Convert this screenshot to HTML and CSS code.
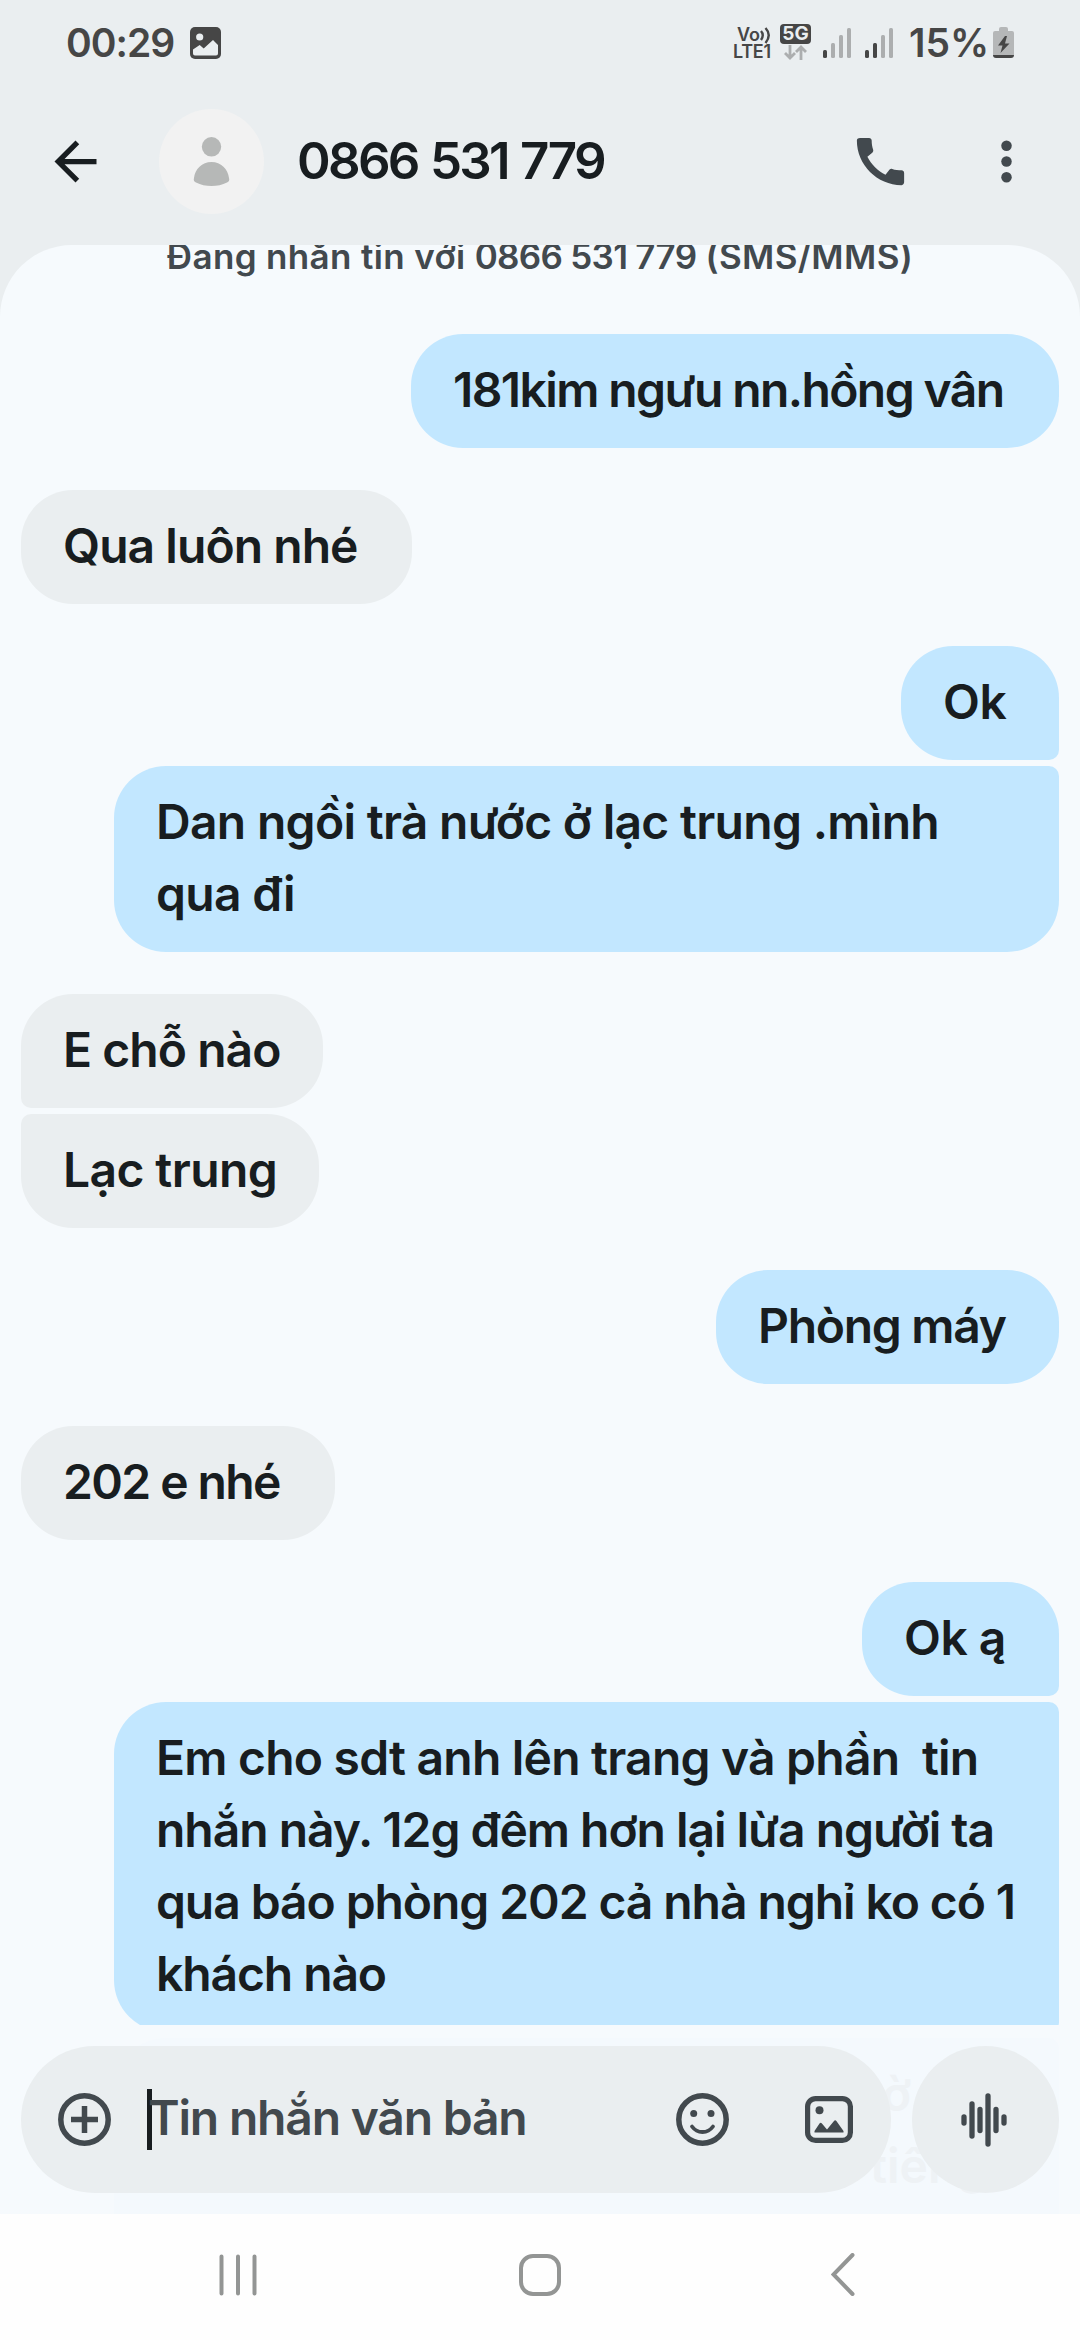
FILE: index.html
```html
<!DOCTYPE html>
<html lang="vi">
<head>
<meta charset="utf-8">
<title>0866 531 779</title>
<link rel="stylesheet" href="styles.css">
</head>
<body>
<div class="phone">
  <header class="top">
    <div class="status">
      <span class="clock">00:29</span>
      <svg class="shot" width="31" height="32" viewBox="0 0 31 32"><rect width="31" height="32" rx="5" fill="#464646"/><circle cx="9.700" cy="10" r="3.600" fill="#eaeef0"/><path d="M3 22.500 9.700 18l4 3.500L23 13l5 5v8.500q0 2-2 2H5q-2 0-2-2z" fill="#eaeef0"/></svg>
      <div class="status-right">
        <div class="volte"><span class="vo">Vo<svg width="11" height="17" viewBox="0 0 11 17" fill="none" stroke="#464646" stroke-width="2.400"><path d="M1 4q3.500 4 0 9M5.500 1q6.500 7 0 15"/></svg></span><span class="lte">LTE1</span></div>
        <div class="net"><span class="badge">5G</span><svg width="24" height="15" viewBox="0 0 24 15" fill="none" stroke="#acaeaf" stroke-width="2.800"><path d="M6 0v13M1 8l5 5 5-5M17 15V2M12 7l5-5 5 5"/></svg></div>
        <svg class="signal" width="28" height="30" viewBox="0 0 28 30" fill="#acaeaf"><rect y="22" width="4" height="8" rx="1.500" fill="#464646"/><rect x="8" y="15" width="4" height="15" rx="1.500"/><rect x="16" y="7" width="4" height="23" rx="1.500"/><rect x="24" width="4" height="30" rx="1.500"/></svg>
        <svg class="signal second" width="28" height="30" viewBox="0 0 28 30" fill="#acaeaf"><rect y="22" width="4" height="8" rx="1.500" fill="#464646"/><rect x="8" y="15" width="4" height="15" rx="1.500" fill="#464646"/><rect x="16" y="7" width="4" height="23" rx="1.500"/><rect x="24" width="4" height="30" rx="1.500"/></svg>
        <span class="percent">15%</span>
        <svg class="battery" width="21" height="31" viewBox="0 0 21 31"><path d="M6 4V2q0-2 2-2h5q2 0 2 2v2h4q2 0 2 2v22H0V6q0-2 2-2z" fill="#b5b7b8"/><path d="M0 28h21q0 3-3 3H3q-3 0-3-3z" fill="#464646"/><path d="M12 9 5 18.500h4.500L7.500 26l9-9.500H12L14 9z" fill="#464646"/></svg>
      </div>
    </div>
    <div class="bar">
      <svg class="back" width="63" height="63" viewBox="0 0 24 24"><path fill="#181d20" d="M20 11H7.830l5.590-5.590L12 4l-8 8 8 8 1.410-1.410L7.830 13H20z"/></svg>
      <svg class="avatar" width="105" height="105" viewBox="0 0 105 105"><circle cx="52.500" cy="52.500" r="52.500" fill="#f2f2f2"/><circle cx="52.500" cy="37.800" r="9.700" fill="#b6b8b7"/><path d="M35 69c1-9 8-16 17.500-16S69 60 70 69q1 3-2 4.500-7 3.500-15.500 3.500T37 73.500Q34 72 35 69z" fill="#b6b8b7"/></svg>
      <h1 class="title">0866 531 779</h1>
      <svg class="call" width="63" height="63" viewBox="0 0 24 24"><path fill="#42494e" d="M20.010 15.380c-1.230 0-2.420-.2-3.530-.56-.35-.12-.74-.03-1.010.24l-1.570 1.970c-2.830-1.350-5.480-3.900-6.890-6.830l1.950-1.660c.27-.28.35-.67.24-1.020-.37-1.110-.56-2.300-.56-3.530 0-.54-.45-.99-.99-.99H4.190C3.650 3 3 3.240 3 3.990 3 13.280 10.730 21 20.010 21c.71 0 .99-.63.99-1.180v-3.450c0-.54-.45-.99-.99-.99z"/></svg>
      <svg class="more" width="63" height="63" viewBox="0 0 24 24" fill="#42494e"><circle cx="12" cy="6" r="2"/><circle cx="12" cy="12" r="2"/><circle cx="12" cy="18" r="2"/></svg>
    </div>
  </header>
  <main class="thread">
    <p class="notice">Đang nhắn tin với <span class="number">0866 531 779</span> (SMS/MMS)</p>
    <div class="group out"><p class="msg m1">181kim ngưu nn.hồng vân</p></div>
    <div class="group in"><p class="msg m2">Qua luôn nhé</p></div>
    <div class="group out"><p class="msg m3">Ok</p><p class="msg m4">Dan ngồi trà nước ở lạc trung .mình<br>qua đi</p></div>
    <div class="group in"><p class="msg m5">E chỗ nào</p><p class="msg m6">Lạc trung</p></div>
    <div class="group out"><p class="msg m7">Phòng máy</p></div>
    <div class="group in"><p class="msg m8">202 e nhé</p></div>
    <div class="group out"><p class="msg m9">Ok ą</p><p class="msg m10"><span class="l1">Em cho sdt anh lên trang và phần&nbsp; tin</span><br><span class="l2">nhắn này. 12g đêm hơn lại lừa người ta</span><br><span class="l3">qua báo phòng 202 cả nhà nghỉ ko có 1</span><br><span class="l4">khách nào</span></p></div>
  </main>
  <section class="composer">
    <div class="behind"><span class="ghost g1">ờ</span><span class="ghost g2">tiếng</span></div>
    <div class="field">
      <svg class="plus" width="53" height="53" viewBox="0 0 53 53" fill="none" stroke="#42494e" stroke-width="5.500"><circle cx="26.500" cy="26.500" r="23.700"/><path d="M26.500 13v27M13 26.500h27"/></svg>
      <span class="caret"></span>
      <span class="hint">Tin nhắn văn bản</span>
      <svg class="smile" width="53" height="53" viewBox="0 0 53 53" fill="none" stroke="#42494e"><circle cx="26.500" cy="26.500" r="23.700" stroke-width="5.500"/><g fill="#42494e" stroke="none"><circle cx="17.700" cy="20.500" r="3.500"/><circle cx="35" cy="20.500" r="3.500"/></g><path d="M16 33.500q4 5.500 10.500 5.500T37 33.500" stroke-width="3.800" stroke-linecap="round"/></svg>
      <svg class="pic" width="48" height="47" viewBox="0 0 48 47"><rect x="2.600" y="2.600" width="42.800" height="41.800" rx="8" fill="none" stroke="#42494e" stroke-width="5.200"/><circle cx="14.500" cy="14.300" r="4" fill="#42494e"/><path d="M9.500 36.500 9.500 35l5-7.500q1.200-1.500 2.400 0L22 33.500l7-8.500q1.200-1.500 2.400 0L38.500 35v1.500z" fill="#42494e"/></svg>
    </div>
    <div class="voice"><svg width="53" height="54" viewBox="0 0 53 54" stroke="#42494e" stroke-width="5.300" stroke-linecap="round"><path d="M5 24v6M13 11v32M21 16.500v21M29 3v48M37 16.500v21M45 24v6"/></svg></div>
  </section>
  <nav class="nav">
    <svg width="38" height="42" viewBox="0 0 38 42" stroke="#939594" stroke-width="4" stroke-linecap="round"><path d="M2.500 2.500v37M19 2.500v37M35.500 2.500v37"/></svg>
    <svg class="home" width="42" height="42" viewBox="0 0 42 42"><rect x="2" y="2" width="38" height="38" rx="12" fill="none" stroke="#939594" stroke-width="4"/></svg>
    <svg width="24" height="43" viewBox="0 0 24 43" fill="none" stroke="#939594" stroke-width="4" stroke-linecap="round"><path d="M21.500 2 2.500 21.500l19 19.500"/></svg>
  </nav>
</div>
</body>
</html>
```
FILE: styles.css
```css
* { box-sizing: border-box; margin: 0; padding: 0; }
body { width: 1080px; height: 2340px; overflow: hidden; background: #eaeef0; font-family: Inter, "Open Sans", sans-serif; }
svg { display: block; flex: none; }
.phone { display: flex; flex-direction: column; width: 1080px; height: 2340px; }

.top { height: 245px; flex: none; }
.status { display: flex; align-items: flex-start; height: 80px; padding: 27px 66px 0 66px; color: #464646; }
.clock, .percent { font-size: 39px; line-height: 31px; font-weight: 600; white-space: nowrap; }
.clock { width: 124px; letter-spacing: -1px; }
.status-right { display: flex; margin-left: auto; align-items: flex-start; }
.volte { width: 47px; display: flex; flex-direction: column; font-size: 18px; font-weight: 600; line-height: 15px; }
.vo { display: flex; padding-left: 4px; height: 17px; }
.lte { letter-spacing: -0.3px; line-height: 16px; }
.net { width: 43px; margin-top: -3px; }
.net svg { margin: 1px 0 0 4px; }
.badge { display: block; width: 31px; height: 20px; border-radius: 4px; background: #464646; color: #eaeef0; font-size: 19px; line-height: 20px; font-weight: 700; text-align: center; }
.signal { margin: 1px 14px 0 0; }
.second { margin-right: 16px; }
.percent { width: 84px; }
.bar { display: flex; align-items: center; height: 165px; padding: 0 42px 2px 44px; }
.avatar { margin-left: 52px; }
.title { margin: -3px 0 0 33px; flex: 1; font-size: 51px; font-weight: 600; letter-spacing: -2.7px; word-spacing: 2px; color: #181d20; white-space: nowrap; }
.more { margin-left: 63px; }

.thread { height: 1780px; flex: none; overflow: hidden; background: #f6fafd; border-radius: 72px 72px 0 0; padding: 0 21px; display: flex; flex-direction: column; gap: 42px; }
.notice { height: 47px; flex: none; margin-top: -10px; margin-bottom: 10px; line-height: 42px; font-size: 35px; font-weight: 600; letter-spacing: 0.35px; color: #42494e; text-align: center; white-space: nowrap; }
.number { letter-spacing: -0.7px; }
.group { display: flex; flex-direction: column; gap: 6px; flex: none; }
.out { align-items: flex-end; }
.in { align-items: flex-start; }
.msg { padding: 20px 42px 22px; border-radius: 52px; font-size: 48px; line-height: 72px; font-weight: 600; color: #181d20; white-space: nowrap; }
.out .msg { background: #c2e7ff; }
.in .msg { background: #eaeef0; }
.out .msg + .msg { border-top-right-radius: 10px; }
.out .msg:not(:last-child) { border-bottom-right-radius: 10px; }
.in .msg + .msg { border-top-left-radius: 10px; }
.in .msg:not(:last-child) { border-bottom-left-radius: 10px; }
.m1 { width: 648px; letter-spacing: -1.6px; }
.m2 { width: 391px; letter-spacing: -0.95px; }
.m3 { width: 158px; letter-spacing: -0.5px; }
.m4, .m10 { width: 945px; }
.m4 { letter-spacing: -0.7px; }
.m5 { width: 302px; letter-spacing: -0.95px; }
.m6 { width: 298px; letter-spacing: -0.6px; }
.m7 { width: 343px; letter-spacing: -1.3px; }
.m8 { width: 314px; letter-spacing: -1.6px; }
.m9 { width: 197px; letter-spacing: -0.5px; }
.out .m10 { height: 330px; border-bottom-right-radius: 10px; }
.l1 { letter-spacing: -0.78px; }
.l2 { letter-spacing: -1.03px; }
.l3 { letter-spacing: -1.08px; }
.l4 { letter-spacing: -1.1px; }

.composer { position: relative; height: 189px; flex: none; padding: 21px; display: flex; gap: 21px; background: #f6fafd; }
.behind { position: absolute; left: 114px; right: 21px; top: 13px; bottom: 0; border-radius: 52px 10px 0 0; background: #f4f9fd; }
.ghost { position: absolute; font-size: 48px; line-height: 72px; font-weight: 600; color: #eef2f5; }
.g1 { left: 768px; top: 20px; }
.g2 { left: 756px; top: 92px; }
.field { position: relative; width: 870px; height: 147px; border-radius: 74px; background: #eaeef0; display: flex; align-items: center; padding: 0 38px 0 37px; }
.caret { width: 5px; height: 61px; margin: 0 -4px 0 36px; background: #181d20; }
.hint { flex: 1; margin-top: -5px; font-size: 48px; font-weight: 600; letter-spacing: -1.2px; color: #42494e; white-space: nowrap; }
.pic { margin-left: 76px; }
.voice { position: relative; width: 147px; height: 147px; border-radius: 50%; background: #eaeef0; display: flex; align-items: center; justify-content: center; }

.nav { flex: 1; background: #fefefe; display: flex; align-items: center; justify-content: space-between; padding: 0 225px 5px 219px; }
.home { margin-right: 8px; }
```
